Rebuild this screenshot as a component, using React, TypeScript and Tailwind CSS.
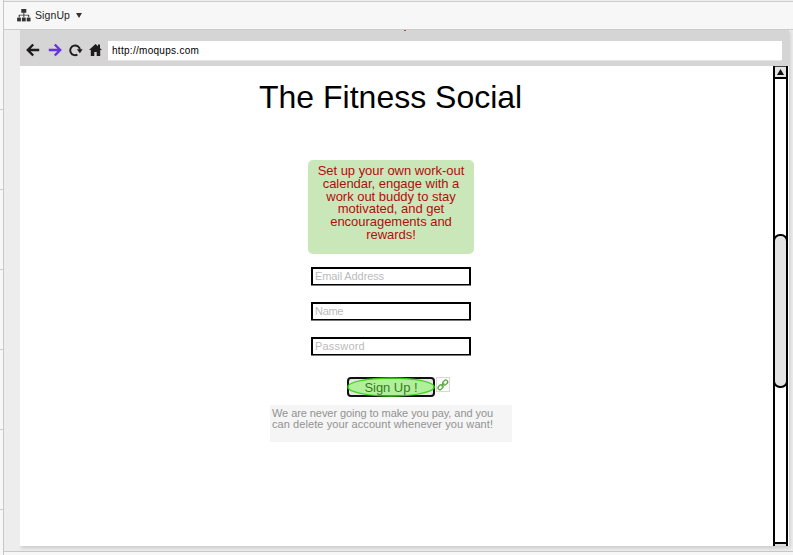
import React from "react";

const font = "font-['Liberation_Sans',Arial,sans-serif]";

function SitemapIcon() {
  return (
    <svg width="14" height="13" viewBox="0 0 14 13" fill="#333" className="shrink-0">
      <rect x="4.3" y="0" width="5" height="3.8" />
      <path d="M6.4 3.5h.9v2.2h4.9v2.6h-1V6.6H7.3v2h-.9v-2H2.7v1.7h-1V5.7h4.7z" />
      <rect x="0.1" y="8.6" width="3.8" height="3.8" />
      <rect x="4.9" y="8.6" width="3.8" height="3.8" />
      <rect x="9.7" y="8.6" width="3.8" height="3.8" />
    </svg>
  );
}

function NavIcons() {
  return (
    <div className="flex items-center h-[14px] shrink-0 mb-px">
      <svg width="14" height="14" viewBox="0 0 14 14" fill="none" stroke="#1f1b1c" strokeWidth="2.4">
        <path d="M13.2 7H2.2M7.2 1.5L1.8 7L7.2 12.5" />
      </svg>
      <svg width="14" height="14" viewBox="0 0 14 14" fill="none" stroke="#6733e0" strokeWidth="2.4" className="ml-2">
        <path d="M.8 7h11M6.8 1.5L12.2 7L6.8 12.5" />
      </svg>
      <svg width="14" height="14" viewBox="0 0 14 14" fill="none" stroke="#1f1b1c" strokeWidth="1.9" className="ml-[7px]">
        <path d="M8.4 11.7A4.9 4.9 0 1 1 11 6.6" />
        <path d="M7.8 6.2h5.8l-2.7 4z" fill="#1f1b1c" stroke="none" />
      </svg>
      <svg width="13" height="14" viewBox="0 0 13 14" fill="#1f1b1c" className="ml-[6px]">
        <path d="M6.5 1L9 3.3V1.6h2v3.6l2 1.9h-1.8V13H7.7V9H5.3v4H1.8V7.1H0z" />
      </svg>
    </div>
  );
}

function Field({ label, className }: { label: string; className: string }) {
  return (
    <div className="w-[160px] h-[18px] border-2 border-b border-black bg-white pl-[2px] text-[11px] leading-[15px] text-[#bbb] shadow-[0_1px_0_#777] whitespace-nowrap">
      <span className={className}>{label}</span>
    </div>
  );
}

function Ruler() {
  return (
    <div className="w-[4px] h-full shrink-0 bg-[#f7f7f7] border-r border-[#c8c8c8] pt-[109px] flex flex-col gap-[79px]">
      {[0, 1, 2, 3, 4, 5].map((n) => (
        <div key={n} className="h-px w-full shrink-0 bg-[#ccc]" />
      ))}
    </div>
  );
}

function Scrollbar() {
  return (
    <div className="w-[15px] h-[480px] shrink-0 border-x-2 border-black bg-white flex flex-col">
      <div className="h-[13px] shrink-0 border-t border-b-2 border-b-black border-t-[#444] bg-[#e4e4e4] flex items-center justify-center">
        <svg width="7" height="6" viewBox="0 0 7 6"><path d="M3.5 0L7 6H0z" fill="#111" /></svg>
      </div>
      <div className="mt-[155px] -mx-[2px] h-[154px] shrink-0 rounded-[7px] border-2 border-black bg-[#e4e4e4]" />
      <div className="mt-auto h-[4px] border-t-2 border-black bg-[#ddd]" />
    </div>
  );
}

export default function App() {
  return (
    <div className={`w-[793px] h-[555px] overflow-hidden flex bg-[#ededed] ${font}`}>
      <Ruler />
      <div className="w-[789px] h-full flex flex-col">
        <div className="h-[29px] shrink-0 border-y border-[#ccc] mt-px bg-[#f7f7f7] flex items-center pl-[13px] pb-px text-[#222]">
          <SitemapIcon />
          <span className="ml-[4px] text-[10.5px] tracking-[0.1px] leading-[14px]">SignUp</span>
          <svg width="6" height="5" viewBox="0 0 6 5" className="ml-[6px]"><path d="M0 0h6L3 5z" fill="#333" /></svg>
        </div>
        <div className="relative ml-4 w-[769px] h-[516px] shrink-0 bg-white shadow-[1px_2px_4px_#c8c8c8] [clip-path:inset(0_-8px_-8px_0)]">
          <div className="absolute left-[384px] top-0 w-[2px] h-px bg-[#b5453c]" />
          <div className="h-[36px] bg-[#d5d5d5] flex items-center pl-[6px] pt-[5px]">
            <NavIcons />
            <div className="ml-[6px] w-[674px] h-[20px] bg-white border-b border-[#e5e5e5] pl-[4px] text-[10px] tracking-[0.29px] leading-[19px] text-black">http://moqups.com</div>
          </div>
          <div className="flex h-[480px]">
            <div className="w-[753px] flex flex-col">
              <h1 className="ml-[239px] mt-[11px] h-[40px] text-[32px] leading-[40px] text-black whitespace-nowrap">The Fitness Social</h1>
              <div className="ml-[288px] mt-[43px] w-[166px] h-[94px] rounded-[5px] bg-[#cae7b9] pt-[5px] text-center text-[13px] tracking-[-0.03px] leading-[12.8px] text-[#b20d0d] whitespace-nowrap">
                Set up your own work-out<br />calendar, engage with a<br />work out buddy to stay<br />motivated, and get<br />encouragements and<br />rewards!
              </div>
              <div className="ml-[291px] mt-[13px] flex flex-col gap-[17px]">
                <Field label="Email Address" className="tracking-[-0.1px]" />
                <Field label="Name" className="tracking-[-0.3px]" />
                <Field label="Password" className="tracking-[0.2px]" />
              </div>
              <div className="ml-[327px] mt-[22px] h-[20px] flex">
                <div className="relative w-[88px] h-[20px] rounded-[4px] border-2 border-[#111] bg-[#e6e6e6] text-center text-[13px] leading-[17px] text-[#111] whitespace-nowrap">
                  <span className="tracking-[-0.05px]">Sign Up !</span>
                  <svg width="88" height="20" viewBox="0 0 88 20" className="absolute -left-[2px] -top-[2px]">
                    <ellipse cx="44" cy="10" rx="43.2" ry="9" fill="#66ff33" fillOpacity=".42" stroke="#35d312" strokeWidth="1.5" strokeOpacity=".9" />
                  </svg>
                </div>
                <div className="ml-px w-[14px] h-[15px] bg-[#fafafa] border border-[#d8d8d8] flex items-center justify-center">
                  <svg width="12" height="12" viewBox="0 0 12 12" fill="none" stroke="#57a83c" strokeWidth="1.3">
                    <rect x="-2.7" y="-1.9" width="5.4" height="3.8" rx="1.9" transform="translate(3.5 8.2) rotate(-45)" />
                    <rect x="-2.7" y="-1.9" width="5.4" height="3.8" rx="1.9" transform="translate(8.2 3.5) rotate(-45)" />
                    <path d="M4.4 7.3l2.9-2.9" />
                  </svg>
                </div>
              </div>
              <div className="ml-[250px] mt-[8px] w-[242px] h-[37px] bg-[#f5f5f5] pl-[2px] pt-[3px] text-[11px] leading-[11px] text-[#929292] whitespace-nowrap">
                <span className="tracking-[-0.07px]">We are never going to make you pay, and you</span><br />
                <span className="tracking-[0.08px]">can delete your account whenever you want!</span>
              </div>
            </div>
            <Scrollbar />
          </div>
        </div>
        <div className="mt-[5px] h-[4px] shrink-0 border-t border-[#c8c8c8] bg-[#f7f7f7]" />
      </div>
    </div>
  );
}
